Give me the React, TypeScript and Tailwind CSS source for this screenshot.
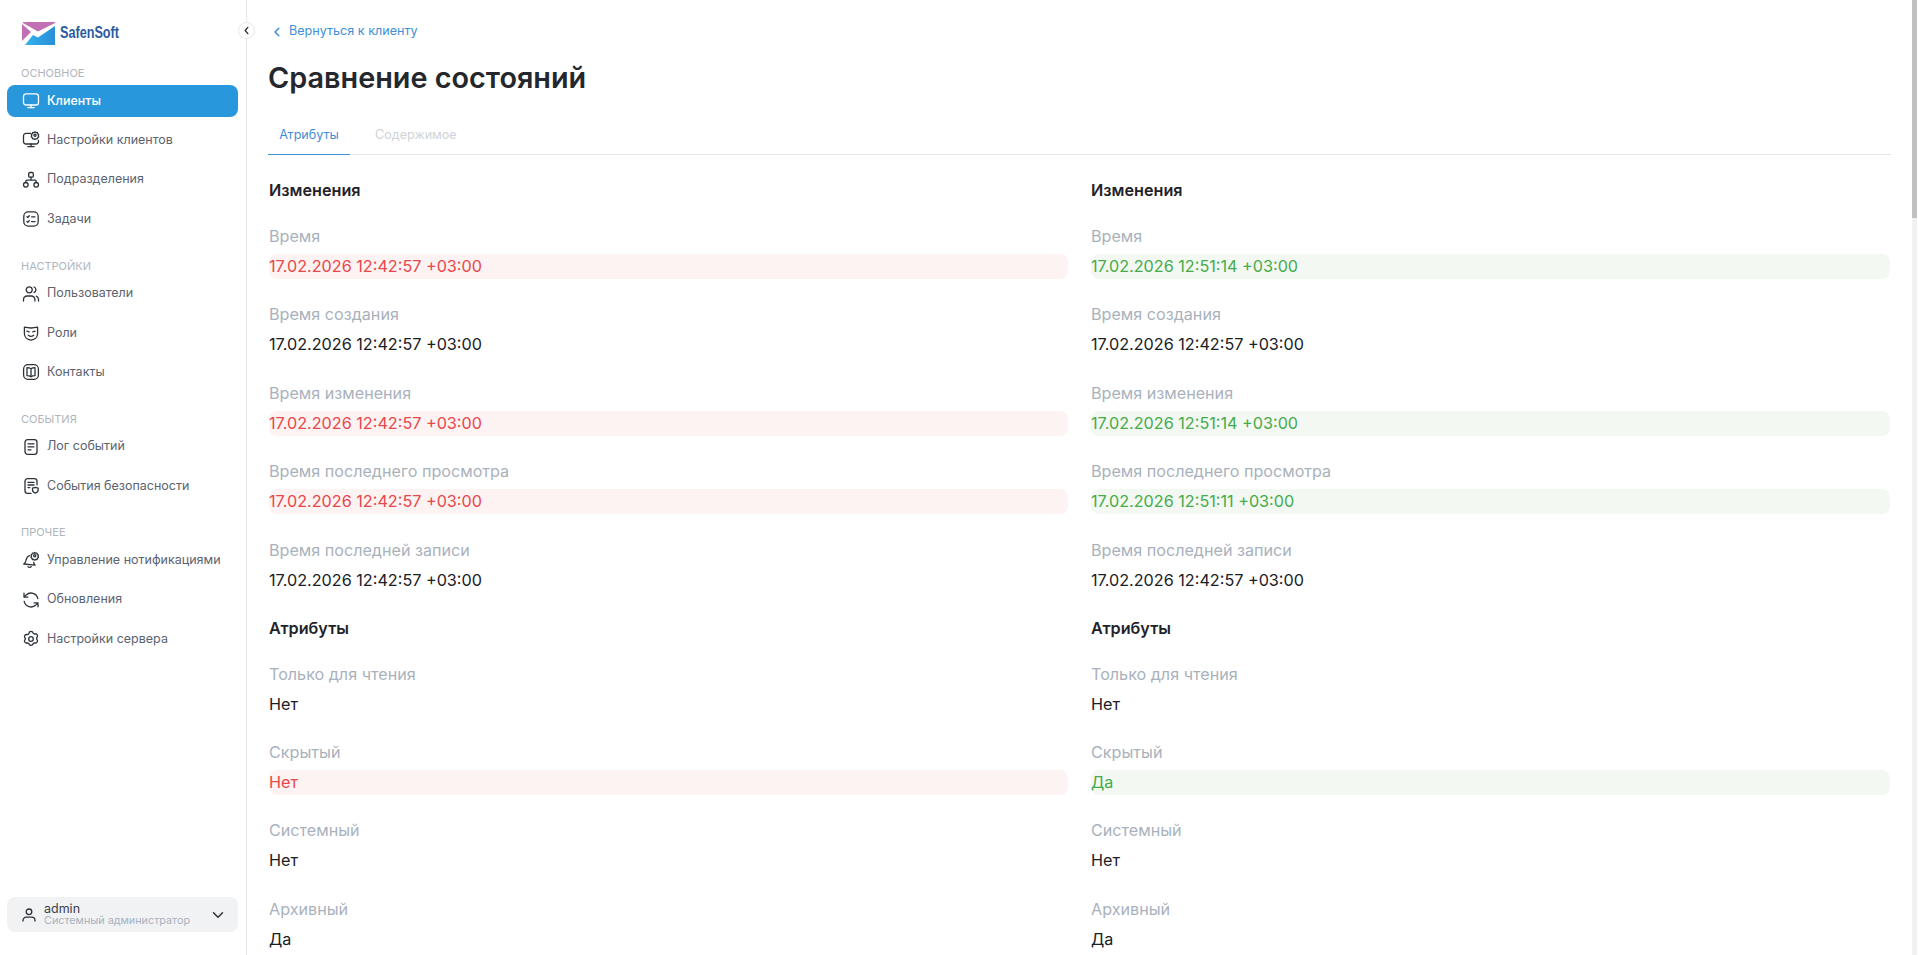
import type { ReactNode } from "react";

const stroke = {
  fill: "none",
  stroke: "currentColor",
  strokeWidth: 1.3,
  strokeLinecap: "round" as const,
  strokeLinejoin: "round" as const,
};

function Icon({ children, className = "" }: { children: ReactNode; className?: string }) {
  return (
    <svg viewBox="0 0 18 18" className={`h-[18px] w-[18px] shrink-0 ${className}`} {...stroke}>
      {children}
    </svg>
  );
}

const icons: Record<string, ReactNode> = {
  monitor: (
    <>
      <rect x="1.5" y="1.8" width="15" height="11.2" rx="2.6" />
      <path d="M9 13v2.4M5.8 15.6h6.4" />
    </>
  ),
  monitorCog: (
    <>
      <path d="M8.6 2.4H4a2.5 2.5 0 0 0-2.5 2.500v5.600A2.500 2.500 0 0 0 4 13h10a2.500 2.500 0 0 0 2.500-2.500V9.400" />
      <path d="M9 13v2.400M5.800 15.600h6.400" />
      <circle cx="13" cy="4.200" r="1.100" />
      <path d="M13 .8l1 .8 1.300-.1.400 1.200 1 .9-.4 1.100.4 1.100-1 .9-.4 1.200-1.300-.1-1 .8-1-.8-1.300.1-.4-1.200-1-.9.4-1.100-.4-1.100 1-.9.4-1.200 1.300.1z" />
    </>
  ),
  network: (
    <>
      <rect x="6.700" y="1.500" width="4.600" height="4.600" rx="1.200" />
      <circle cx="3.800" cy="13.800" r="2.300" />
      <circle cx="14.200" cy="13.800" r="2.300" />
      <path d="M9 6.100v3M3.800 11.500v-1a1.400 1.400 0 0 1 1.400-1.400h7.600a1.400 1.400 0 0 1 1.400 1.400v1" />
    </>
  ),
  tasks: (
    <>
      <rect x="1.800" y="1.800" width="14.400" height="14.400" rx="4.400" />
      <path d="M4.900 6.600l.9.9 1.500-1.700M9.600 6.800h3.400M4.900 11.400l.9.9 1.500-1.700M9.600 11.600h3.400" />
    </>
  ),
  users: (
    <>
      <circle cx="7.200" cy="4.800" r="3" />
      <path d="M1.500 16v-1.400a3.600 3.600 0 0 1 3.600-3.600h4.200a3.600 3.600 0 0 1 3.600 3.600V16" />
      <path d="M12 2a3 3 0 0 1 0 5.600M14.300 11.200a3.400 3.400 0 0 1 2.200 3.200V16" />
    </>
  ),
  mask: (
    <>
      <path d="M2.400 3.200c4.200 1 9 1 13.200 0v6.400c0 3.600-2.900 6.200-6.600 6.600-3.700-.4-6.600-3-6.600-6.600z" />
      <path d="M4.900 7.200l2.300.6M13.100 7.200l-2.300.6M6.300 11.200c1.600 1.300 3.800 1.300 5.400 0" />
    </>
  ),
  contacts: (
    <>
      <rect x="1.600" y="1.600" width="14.800" height="14.800" rx="4.400" />
      <path d="M9 5.800c-1.200-.9-2.500-1.100-4-1.100v8c1.500 0 2.800.2 4 1.100 1.200-.9 2.500-1.100 4-1.100v-8c-1.500 0-2.800.2-4 1.100zM9 5.800v8" />
    </>
  ),
  log: (
    <>
      <rect x="3" y="1.600" width="12" height="14.800" rx="2.600" />
      <path d="M6 5.800h6M6 8.800h6M6 11.800h3" />
    </>
  ),
  logShield: (
    <>
      <path d="M9 16.400H5.600A2.600 2.600 0 0 1 3 13.800V4.200a2.600 2.600 0 0 1 2.600-2.600h6.800A2.600 2.600 0 0 1 15 4.200v3.600" />
      <path d="M6 5.400h6M6 8h6M6 10.600h1.800" />
      <path d="M13.300 10.300l2.800.9v1.900c0 1.500-1.200 2.600-2.800 3.100-1.600-.5-2.800-1.600-2.800-3.100v-1.900z" />
    </>
  ),
  bell: (
    <>
      <path d="M7.400 4.600C5.400 5.300 4.500 7 4.100 9c-.3 1.700-1 3-2.300 4l11.200 1.200c-.7-.8-1.100-1.700-1.300-2.700" />
      <path d="M6 15.600c.8 1 2.300 1.100 3.200.2" />
      <circle cx="12.700" cy="4.800" r="1.100" />
      <path d="M12.700 1.400l1 .8 1.300-.1.400 1.200 1 .9-.4 1.100.4 1.100-1 .9-.4 1.200-1.300-.1-1 .8-1-.8-1.300.1-.4-1.200-1-.9.4-1.100-.4-1.100 1-.9.4-1.200 1.300.1z" />
    </>
  ),
  refresh: (
    <>
      <path d="M15.800 7.600A7 7 0 0 0 4.200 3.900L2 6.100M2 2.200v3.900h3.900" />
      <path d="M2.200 10.400a7 7 0 0 0 11.600 3.700l2.200-2.200M16 15.800v-3.900h-3.900" />
    </>
  ),
  gear: (
    <>
      <circle cx="9" cy="9" r="2.300" />
      <path d="M7.400 2.200c.6-1 2.600-1 3.200 0l.6 1.100 1.300.7 1.300-.1c1.100 0 2.100 1.700 1.600 2.700l-.7 1.100v1.500l.7 1.100c.5 1-.5 2.700-1.600 2.700l-1.300-.1-1.300.7-.6 1.100c-.6 1-2.600 1-3.200 0l-.6-1.100-1.300-.7-1.300.1c-1.100 0-2.100-1.700-1.600-2.700l.7-1.100V8.300l-.7-1.100C2.100 6.200 3.100 4.500 4.200 4.500l1.300.1 1.300-.7z" />
    </>
  ),
};

const navGroups = [
  {
    title: "ОСНОВНОЕ",
    top: "mt-0",
    items: [
      { icon: "monitor", label: "Клиенты", active: true },
      { icon: "monitorCog", label: "Настройки клиентов" },
      { icon: "network", label: "Подразделения" },
      { icon: "tasks", label: "Задачи" },
    ],
  },
  {
    title: "НАСТРОЙКИ",
    top: "mt-[22.500px]",
    items: [
      { icon: "users", label: "Пользователи" },
      { icon: "mask", label: "Роли" },
      { icon: "contacts", label: "Контакты" },
    ],
  },
  {
    title: "СОБЫТИЯ",
    top: "mt-[22.500px]",
    items: [
      { icon: "log", label: "Лог событий" },
      { icon: "logShield", label: "События безопасности" },
    ],
  },
  {
    title: "ПРОЧЕЕ",
    top: "mt-[22.500px]",
    items: [
      { icon: "bell", label: "Управление нотификациями" },
      { icon: "refresh", label: "Обновления" },
      { icon: "gear", label: "Настройки сервера" },
    ],
  },
];

type Field = { label: string; left: string; right: string };

const changes: Field[] = [
  { label: "Время", left: "17.02.2026 12:42:57 +03:00", right: "17.02.2026 12:51:14 +03:00" },
  { label: "Время создания", left: "17.02.2026 12:42:57 +03:00", right: "17.02.2026 12:42:57 +03:00" },
  { label: "Время изменения", left: "17.02.2026 12:42:57 +03:00", right: "17.02.2026 12:51:14 +03:00" },
  { label: "Время последнего просмотра", left: "17.02.2026 12:42:57 +03:00", right: "17.02.2026 12:51:11 +03:00" },
  { label: "Время последней записи", left: "17.02.2026 12:42:57 +03:00", right: "17.02.2026 12:42:57 +03:00" },
];

const attributes: Field[] = [
  { label: "Только для чтения", left: "Нет", right: "Нет" },
  { label: "Скрытый", left: "Нет", right: "Да" },
  { label: "Системный", left: "Нет", right: "Нет" },
  { label: "Архивный", left: "Да", right: "Да" },
];

function Logo() {
  return (
    <div className="flex h-[22px] items-center pl-[22px]">
      <svg viewBox="0 0 34 23" className="h-[23px] w-[34px] shrink-0">
        <defs>
          <linearGradient id="logoBlue" x1="0" x2="1" y1="0" y2="0">
            <stop offset="0" stopColor="#30b2ee" />
            <stop offset="1" stopColor="#2a8ed6" />
          </linearGradient>
        </defs>
        <path d="M1 0h32v1L16 9.500 1 1z" fill="#c070b3" />
        <path d="M0 2l9 8-9 9z" fill="#c070b3" />
        <path d="M33 4v19H3l8-10 5 2.500z" fill="url(#logoBlue)" />
      </svg>
      <span className="ml-[4px] origin-left scale-x-[0.79] font-['Liberation_Sans'] text-[16px] font-bold whitespace-nowrap text-[#2b5c9f]">
        SafenSoft
      </span>
    </div>
  );
}

function Sidebar() {
  return (
    <aside className="relative flex h-full w-[247px] shrink-0 flex-col border-r border-[#e6e8eb] pt-[22px] pb-[23px]">
      <Logo />
      <button className="absolute top-[22px] right-[-9px] flex h-[17px] w-[17px] items-center justify-center rounded-full border border-[#e6e8eb] bg-white text-[#2b3036]">
        <svg viewBox="0 0 10 10" className="h-[9px] w-[9px]" fill="none" stroke="currentColor" strokeWidth="1.5" strokeLinecap="round" strokeLinejoin="round">
          <path d="M6.500 1.500L3.500 5l3 3.500" />
        </svg>
      </button>
      <nav className="mt-[21.200px] flex flex-col">
        {navGroups.map((group) => (
          <div key={group.title} className={group.top}>
            <div className="px-[21px] text-[11px] leading-[16px] text-[#aeb5bd]">{group.title}</div>
            <ul className="mt-[4px] flex flex-col gap-[7.300px]">
              {group.items.map((item) => (
                <li
                  key={item.label}
                  className={`mr-[8px] ml-[7px] flex h-[32px] items-center gap-[7px] rounded-[8px] pl-[15px] text-[12.500px] ${
                    item.active ? "bg-[#2897db] font-medium text-white" : "text-[#5b6370]"
                  }`}
                >
                  <Icon className={item.active ? "text-white" : "text-[#2c323a]"}>{icons[item.icon]}</Icon>
                  <span>{item.label}</span>
                </li>
              ))}
            </ul>
          </div>
        ))}
      </nav>
      <div className="mt-auto mr-[8px] ml-[7px] flex h-[35px] items-center rounded-[8px] bg-[#f1f2f4] pl-[14px]">
        <svg viewBox="0 0 16 16" className="h-[16px] w-[16px] text-[#2c323a]" fill="none" stroke="currentColor" strokeWidth="1.3" strokeLinecap="round">
          <circle cx="8" cy="4.800" r="2.800" />
          <path d="M2 14v-.6a3.200 3.200 0 0 1 3.200-3.200h5.600a3.200 3.200 0 0 1 3.200 3.200v.6" />
        </svg>
        <div className="ml-[7px] flex flex-col">
          <span className="text-[12.500px] leading-[13px] text-[#3a4049]">admin</span>
          <span className="text-[10.800px] leading-[12px] text-[#a7b3c0]">Системный администратор</span>
        </div>
        <svg viewBox="0 0 12 12" className="mr-[14px] ml-auto h-[12px] w-[12px] text-[#2c323a]" fill="none" stroke="currentColor" strokeWidth="1.5" strokeLinecap="round" strokeLinejoin="round">
          <path d="M1.500 3.800L6 8.200l4.500-4.400" />
        </svg>
      </div>
    </aside>
  );
}

function Value({ text, tone }: { text: string; tone: "same" | "red" | "green" }) {
  const toneClass = {
    same: "text-[#1b2026]",
    red: "bg-[#fdf3f2] text-[#e8474c]",
    green: "bg-[#f3f8f2] text-[#46ab4b]",
  }[tone];
  return <div className={`mt-[6px] h-[25px] rounded-[8px] text-[16.200px] leading-[25px] ${toneClass}`}>{text}</div>;
}

function Column({ title, fields, side }: { title: string; fields: Field[]; side: "left" | "right" }) {
  return (
    <div>
      <h3 className="text-[16.200px] leading-[20px] font-semibold text-[#1f2329]">{title}</h3>
      <div className="mt-[24px] flex flex-col gap-[23.400px]">
        {fields.map((f) => {
          const changed = f.left !== f.right;
          const tone = !changed ? "same" : side === "left" ? "red" : "green";
          return (
            <div key={f.label}>
              <div className="text-[16.150px] leading-[24px] text-[#a9b2bc]">{f.label}</div>
              <Value text={side === "left" ? f.left : f.right} tone={tone} />
            </div>
          );
        })}
      </div>
    </div>
  );
}

function Section({ title, fields, className = "" }: { title: string; fields: Field[]; className?: string }) {
  return (
    <section className={`grid grid-cols-2 gap-x-[23px] px-[1px] ${className}`}>
      <Column title={title} fields={fields} side="left" />
      <Column title={title} fields={fields} side="right" />
    </section>
  );
}

export default function App() {
  return (
    <div className="flex h-[955px] w-full overflow-hidden bg-white font-['Inter',sans-serif]">
      <Sidebar />
      <main className="min-w-0 flex-1 overflow-hidden pt-[23px] pr-[21px] pl-[21px]">
        <a className="flex h-[17px] items-center pl-[4px] text-[12.600px] text-[#3f8fd8]">
          <svg viewBox="0 0 10 10" className="h-[10px] w-[10px]" fill="none" stroke="currentColor" strokeWidth="1.500" strokeLinecap="round" strokeLinejoin="round">
            <path d="M6.800 1.200L3 5l3.800 3.800" />
          </svg>
          <span className="ml-[7px]">Вернуться к клиенту</span>
        </a>
        <h1 className="mt-[19px] text-[28.800px] leading-[38px] font-semibold text-[#24282e]">Сравнение состояний</h1>
        <div className="mt-[22px] flex h-[36px] border-b border-[#e3e6e9]">
          <div className="-mb-px flex w-[82px] items-center justify-center border-b border-[#3f8fd8] pb-[2px] text-[12.600px] text-[#3f8fd8]">
            Атрибуты
          </div>
          <div className="flex items-center pb-[2px] pl-[25px] text-[12.600px] text-[#cfd3d8]">Содержимое</div>
        </div>
        <Section title="Изменения" fields={changes} className="mt-[25px]" />
        <Section title="Атрибуты" fields={attributes} className="mt-[25px]" />
      </main>
      <div className="h-full w-[6px] shrink-0 pr-[1px]">
        <div className="h-full bg-[#f1f1f1]">
          <div className="h-[218px] bg-[#c1c1c1]" />
        </div>
      </div>
    </div>
  );
}
